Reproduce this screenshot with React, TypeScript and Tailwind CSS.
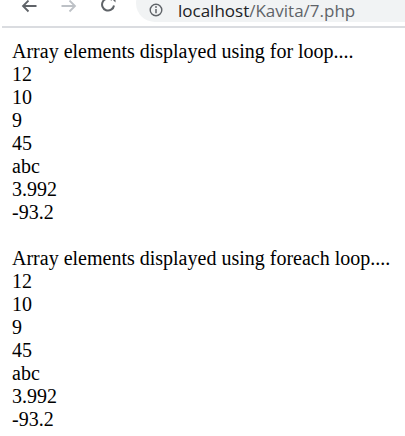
const VALUES = ["12", "10", "9", "45", "abc", "3.992", "-93.2"];

function Toolbar() {
  return (
    <div className="relative h-[28px] overflow-hidden bg-white">
      <div className="absolute left-0 top-[-16px] flex h-[38px] w-full items-center">
        <svg className="ml-[21px] mt-[6px]" width="16" height="16" viewBox="0 0 16 16" fill="none" stroke="#5f6368" strokeWidth="1.8">
          <path d="M15.5 8H2M7.5 2.5L2 8l5.5 5.5" />
        </svg>
        <svg className="ml-[24px] mt-[6px]" width="16" height="16" viewBox="0 0 16 16" fill="none" stroke="#bdc1c6" strokeWidth="1.8">
          <path d="M0.5 8H14M8.5 2.5L14 8l-5.5 5.5" />
        </svg>
        <svg className="ml-[21px] mt-[4px]" width="20" height="20" viewBox="0 0 20 20" fill="none">
          <path d="M16 10.5A6 6 0 1 1 14 5" stroke="#5f6368" strokeWidth="2" />
          <path d="M11.5 1.5h6v6z" fill="#5f6368" />
        </svg>
        <div className="ml-[18px] flex h-[38px] flex-1 items-center rounded-l-full bg-[#f1f3f4] pl-[13px]">
          <svg width="14" height="14" viewBox="0 0 14 14" fill="none" className="mt-[14px]">
            <circle cx="7" cy="7" r="5.8" stroke="#5f6368" strokeWidth="1.4" />
            <path d="M7 6v4.2" stroke="#5f6368" strokeWidth="1.5" />
            <circle cx="7" cy="4" r="0.9" fill="#5f6368" />
          </svg>
          <span
            className="ml-[15px] mt-[14px] text-[17px] leading-none"
            style={{ fontFamily: '"Open Sans", "Noto Sans", sans-serif' }}
          >
            <span className="text-[#202124]">localhost</span>
            <span className="text-[#5f6368]">/Kavita/7.php</span>
          </span>
        </div>
      </div>
      <div className="absolute bottom-0 left-[2px] right-0 h-[2px] bg-[#dadce0]" />
    </div>
  );
}

function Block({ title }: { title: string }) {
  return (
    <div>
      <div>{title}</div>
      {VALUES.map((v, i) => (
        <div key={i}>{v}</div>
      ))}
    </div>
  );
}

export default function App() {
  return (
    <div className="h-[436px] overflow-hidden bg-white">
      <Toolbar />
      <div
        className="px-[12px] pt-[12px] text-[20px] leading-[23px] text-black"
        style={{ fontFamily: '"Liberation Serif", "Times New Roman", serif' }}
      >
        <Block title="Array elements displayed using for loop...." />
        <div className="h-[23px]" />
        <Block title="Array elements displayed using foreach loop...." />
      </div>
    </div>
  );
}
